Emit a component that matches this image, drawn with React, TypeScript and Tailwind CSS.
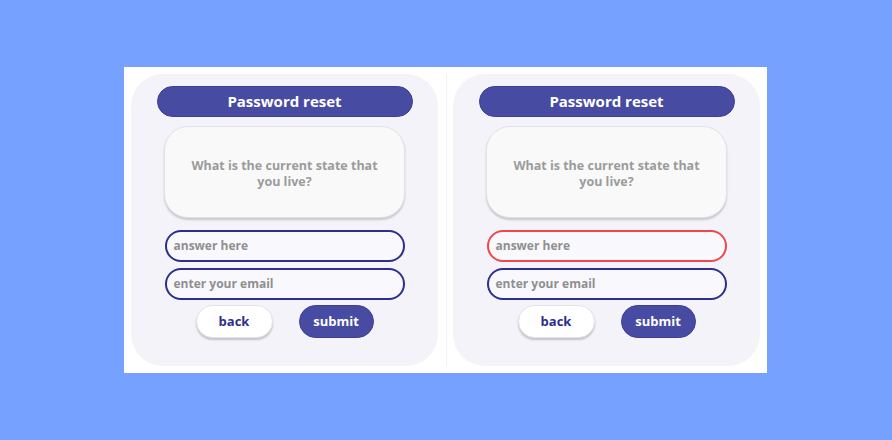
import React from "react";

function Card({ error }: { error?: boolean }) {
  return (
    <div className="w-[307px] h-[292px] shrink-0 rounded-[32px] bg-[#f3f3f9] flex flex-col items-center">
      <div className="mt-[12px] w-[256px] h-[31px] rounded-full bg-[#474ba1] border border-[#3c3f94] flex items-center justify-center text-white font-bold text-[15px]">
        Password reset
      </div>
      <div className="mt-[9px] w-[241px] h-[92px] rounded-[24px] bg-[#f9f9fa] border border-[#e2e2e6] shadow-[0_2px_2px_rgba(0,0,0,0.18)] flex items-center justify-center text-center text-[#9b9b9b] font-bold text-[12.5px] leading-[16px] pt-[4px]">
        <p>
          What is the current state that
          <br />
          you live?
        </p>
      </div>
      <div
        className={
          "mt-[12px] w-[240px] h-[32px] rounded-full bg-[#f9f9fd] border-2 flex items-center pl-[7px] text-[#8f8f8f] font-bold text-[12px] " +
          (error ? "border-[#f0484a]" : "border-[#2d2f8e]")
        }
      >
        answer here
      </div>
      <div className="mt-[6px] w-[240px] h-[32px] rounded-full bg-[#f9f9fd] border-2 border-[#2d2f8e] flex items-center pl-[7px] text-[#8f8f8f] font-bold text-[12px]">
        enter your email
      </div>
      <div className="mt-[5px] flex gap-[26px]">
        <div className="w-[77px] h-[33px] rounded-full bg-white border border-[#e4e4e8] shadow-[0_2px_2px_rgba(0,0,0,0.2)] flex items-center justify-center text-[#2d2f8e] font-bold text-[13px]">
          back
        </div>
        <div className="w-[75px] h-[33px] rounded-full bg-[#474ba1] border border-[#3c3f94] flex items-center justify-center text-white font-bold text-[13px]">
          submit
        </div>
      </div>
    </div>
  );
}

export default function App() {
  return (
    <div
      className="w-[892px] h-[440px] bg-[#77a1fe] pt-[67px] pl-[124px]"
      style={{ fontFamily: "'Open Sans', Lato, sans-serif" }}
    >
      <div className="w-[643px] h-[306px] bg-white p-[7px] flex">
        <Card />
        <div className="ml-[8px] mr-[6px] w-px bg-[#f2f2f8]" />
        <Card error />
      </div>
    </div>
  );
}
